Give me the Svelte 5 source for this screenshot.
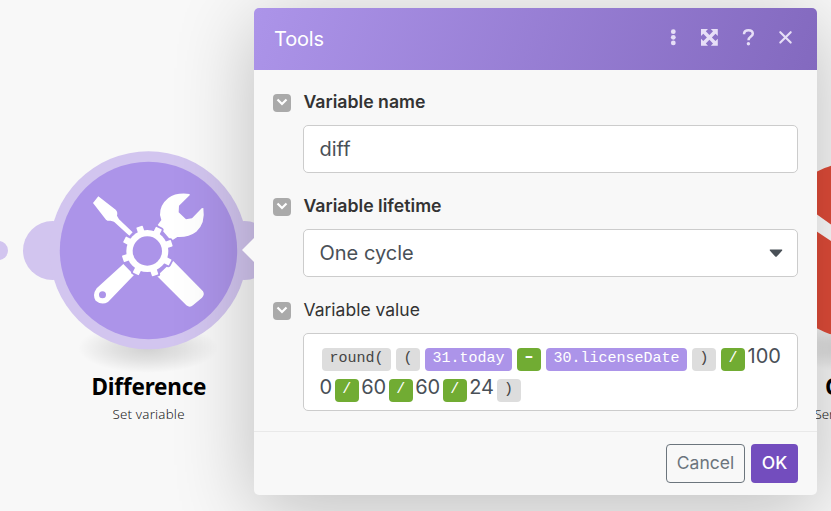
<script>
  const teeth = Array.from({ length: 8 }, (_, i) => 27 + i * 45);
  const formula = [
    [
      { kind: 'fn', text: 'round(' },
      { kind: 'fn', text: '(' },
      { kind: 'ref', text: '31.today' },
      { kind: 'op', text: '-' },
      { kind: 'ref', text: '30.licenseDate' },
      { kind: 'fn', text: ')' },
      { kind: 'op', text: '/' },
      { kind: 'num', text: '100' }
    ],
    [
      { kind: 'num', text: '0' },
      { kind: 'op', text: '/' },
      { kind: 'num', text: '60' },
      { kind: 'op', text: '/' },
      { kind: 'num', text: '60' },
      { kind: 'op', text: '/' },
      { kind: 'num', text: '24' },
      { kind: 'fn', text: ')' }
    ]
  ];
</script>

{#snippet toggle()}
  <span class="toggle">
    <svg width="18" height="18" viewBox="0 0 18 18"><path d="M4.500 5.500 9 10 13.500 5.500" fill="none" stroke="#fff" stroke-width="2.200" /></svg>
  </span>
{/snippet}

<main>
  <svg class="canvas" width="831" height="511" viewBox="0 0 831 511">
    <defs>
      <radialGradient id="ground">
        <stop offset="0" stop-color="#000" stop-opacity=".16" />
        <stop offset=".5" stop-color="#000" stop-opacity=".09" />
        <stop offset="1" stop-color="#000" stop-opacity="0" />
      </radialGradient>
    </defs>
    <ellipse cx="148" cy="348" rx="70" ry="25" fill="url(#ground)" />
    <ellipse cx="858" cy="348" rx="70" ry="25" fill="url(#ground)" />
    <g fill="#d2c5ef">
      <circle cx="-1.5" cy="250.5" r="9.5" />
      <circle cx="52.5" cy="250.5" r="29.5" />
      <circle cx="244.500" cy="250.500" r="29.500" />
      <circle cx="148.500" cy="250.300" r="99" />
    </g>
    <circle cx="148.500" cy="250.500" r="88.700" fill="#ac94e9" />
    <g transform="translate(80 180) scale(.33333)" fill="#fff">
      <path d="M55 49 107 89Q114 95 111 107L117 118 158 157 148 167 102 125 92 122Q84 124 78 119L39 69Z" />
      <path d="M329 42Q288 37 265 54 239 75 240 105L244 120 233 135 270 178 277 181 292 171Q325 173 349 155 377 130 370 84L365 85 336 115 318 118 296 97 297 77 329 46Z" />
      <path fill-rule="evenodd" d="M130 252 50 325Q36 345 47 362 65 377 84 366L162 285ZM57 344a10.500 10.500 0 1 0 21 0a10.500 10.500 0 1 0-21 0Z" />
      <path d="M231 288 319 376Q330 384 339 376L366 353Q375 344 369 334L279 242Z" />
      <g stroke="#ac94e9" stroke-width="11">
        <circle cx="202" cy="213" r="63" />
        {#each teeth as angle}
          <rect x="192" y="136" width="20" height="24" rx="2" transform="rotate({angle} 202 213)" />
        {/each}
      </g>
      <circle cx="202" cy="213" r="63" />
      {#each teeth as angle}
        <rect x="192" y="136" width="20" height="24" rx="2" transform="rotate({angle} 202 213)" />
      {/each}
      <circle cx="202" cy="213" r="44" fill="#ac94e9" />
    </g>
    <circle cx="858.500" cy="250" r="88.700" fill="#e04c39" />
    <path d="M810 209.500 831 224.500V241L810 227Z" fill="#fff" />
    <text class="name" x="149" y="395" textLength="115">Difference</text>
    <text class="kind" x="148.500" y="419" textLength="72">Set variable</text>
  </svg>

  <section class="dialog">
    <header>
      <h1>Tools</h1>
      <svg width="130" height="20" viewBox="664 28 130 20" fill="#e7dff7">
        <circle cx="673.300" cy="31.700" r="2.400" /><circle cx="673.300" cy="37.300" r="2.400" /><circle cx="673.300" cy="42.900" r="2.400" />
        <path d="M701 29H708L705.800 31.300 709.400 35 713 31.300 710.800 29H717.800V36L715.500 33.800 711.900 37.400 715.500 41 717.800 38.800V45.700H710.800L713 43.400 709.400 39.800 705.800 43.400 708 45.700H701V38.800L703.300 41 706.900 37.400 703.300 33.800 701 36Z" />
        <path d="M744.100 34.200V33.100Q744.600 30.300 748.400 30.300 752.800 30.300 752.800 33.800C752.800 36.700 748.500 36.400 748.500 40.300" fill="none" stroke="#e7dff7" stroke-width="2.500" />
        <circle cx="748.400" cy="43.700" r="1.700" />
        <path d="M780.300 32.200 790.700 42.600M790.700 32.200 780.300 42.600" stroke="#e7dff7" stroke-width="2.100" stroke-linecap="round" />
      </svg>
    </header>
    <div class="body">
      <div class="field">
        {@render toggle()}
        <div class="content">
          <span class="label strong">Variable name</span>
          <div class="input">diff</div>
        </div>
      </div>
      <div class="field">
        {@render toggle()}
        <div class="content">
          <span class="label strong">Variable lifetime</span>
          <div class="input">
            One cycle
            <svg width="14" height="9" viewBox="0 0 14 9"><path d="M1.200.500H12.800Q13.800.800 13 1.700L8 7.300Q7 8.300 6 7.300L1 1.700Q.2.800 1.200.500Z" fill="#495057" /></svg>
          </div>
        </div>
      </div>
      <div class="field">
        {@render toggle()}
        <div class="content">
          <span class="label">Variable value</span>
          <div class="formula">
            {#each formula as line}
              <div class="line">
                {#each line as token}<span class={token.kind} class:minus={token.text === '-'}>{token.text}</span>{/each}
              </div>
            {/each}
          </div>
        </div>
      </div>
    </div>
    <footer>
      <button class="cancel">Cancel</button>
      <button class="ok">OK</button>
    </footer>
  </section>
  <svg class="pointer" width="13" height="26" viewBox="0 0 13 26"><path d="M13 0V26L0 13Z" fill="#f8f8f8" /></svg>
  <svg class="neighbour" width="15" height="60" viewBox="816 370 15 60">
    <text class="name" x="825" y="395">G</text>
    <text class="kind" x="814.500" y="419">Send</text>
  </svg>
</main>

<style>
  main {
    position: relative;
    width: 831px;
    height: 511px;
    overflow: hidden;
    box-sizing: border-box;
    padding: 8px 14px 16px 254px;
    background: #f8f8f8;
    font-family: Inter, sans-serif;
  }
  svg { display: block; }
  .canvas { position: absolute; left: 0; top: 0; }
  .name { font: 700 22.500px "Noto Sans", sans-serif; }
  .kind { font: 350 13.300px "Noto Sans", sans-serif; fill: #222; }
  .canvas text { text-anchor: middle; }
  .pointer { position: absolute; left: 242px; top: 237px; }
  .neighbour { position: absolute; left: 816px; top: 370px; }
  .dialog {
    position: relative;
    width: 563px;
    height: 487px;
    border-radius: 5px;
    background: #f8f8f8;
    box-shadow: 0 15px 80px rgba(0, 0, 0, .24);
    display: flex;
    flex-direction: column;
  }
  header {
    height: 62px;
    box-sizing: border-box;
    padding: 0 23px 0 20px;
    display: flex;
    align-items: center;
    justify-content: space-between;
    border-radius: 5px 5px 0 0;
    background: linear-gradient(110deg, #ac94e9, #8369bf);
  }
  header svg { margin-bottom: 2px; }
  h1 { margin: 0; font-size: 20px; font-weight: 420; letter-spacing: -.2px; color: #fff; }
  .body {
    flex: 1;
    padding: 20px 19px 0;
    display: flex;
    flex-direction: column;
    gap: 21px;
  }
  .field { display: flex; gap: 12px; }
  .toggle { flex: none; width: 18px; height: 18px; margin-top: 4px; border-radius: 4px; background: #aaa; }
  .content { flex: 1; min-width: 0; }
  .label { display: block; height: 24px; line-height: 24px; margin-bottom: 11px; padding-left: .5px; font-size: 17.500px; font-weight: 375; color: #333; }
  .strong { font-size: 17.700px; font-weight: 600; }
  .input, .formula {
    box-sizing: border-box;
    border: 1px solid #ccc;
    border-radius: 5px;
    background: #fff;
    color: #495057;
    font-size: 20px;
    font-weight: 375;
  }
  .input { height: 48px; padding: 0 14px 0 15.500px; display: flex; align-items: center; justify-content: space-between; }
  .formula { height: 78px; padding: 7px 10px 0 15.500px; }
  .line { display: flex; align-items: center; height: 31px; }
  .line span { flex: none; }
  .num { height: 31px; line-height: 31px; }
  .fn, .ref, .op {
    box-sizing: border-box;
    height: 23px;
    line-height: 22px;
    margin: 5px 2.500px 0;
    padding: 0 7.500px;
    border-radius: 4px;
    font-family: "Courier New", "Liberation Mono", monospace;
    font-size: 15px;
    font-weight: 400;
  }
  .fn { background: #ddd; color: #444; }
  .ref { background: #ac94e9; color: #fff; }
  .op { background: #71ac33; color: #fff; }
  .minus { padding: 0 3px; font-size: 24px; line-height: 18px; width: 24px; text-align: center; }
  footer {
    height: 64px;
    box-sizing: border-box;
    border-top: 1px solid #e9e9e9;
    padding: 0 19px;
    display: flex;
    align-items: center;
    justify-content: flex-end;
    gap: 6px;
  }
  button { height: 39px; padding: 0 0 2px; border-radius: 4px; font: 375 17.500px Inter, sans-serif; }
  .cancel { width: 79px; border: 1px solid #6c757d; background: transparent; color: #6c757d; }
  .ok { width: 47px; border: 0; background: #734dbe; color: #fff; font-weight: 450; }
</style>
